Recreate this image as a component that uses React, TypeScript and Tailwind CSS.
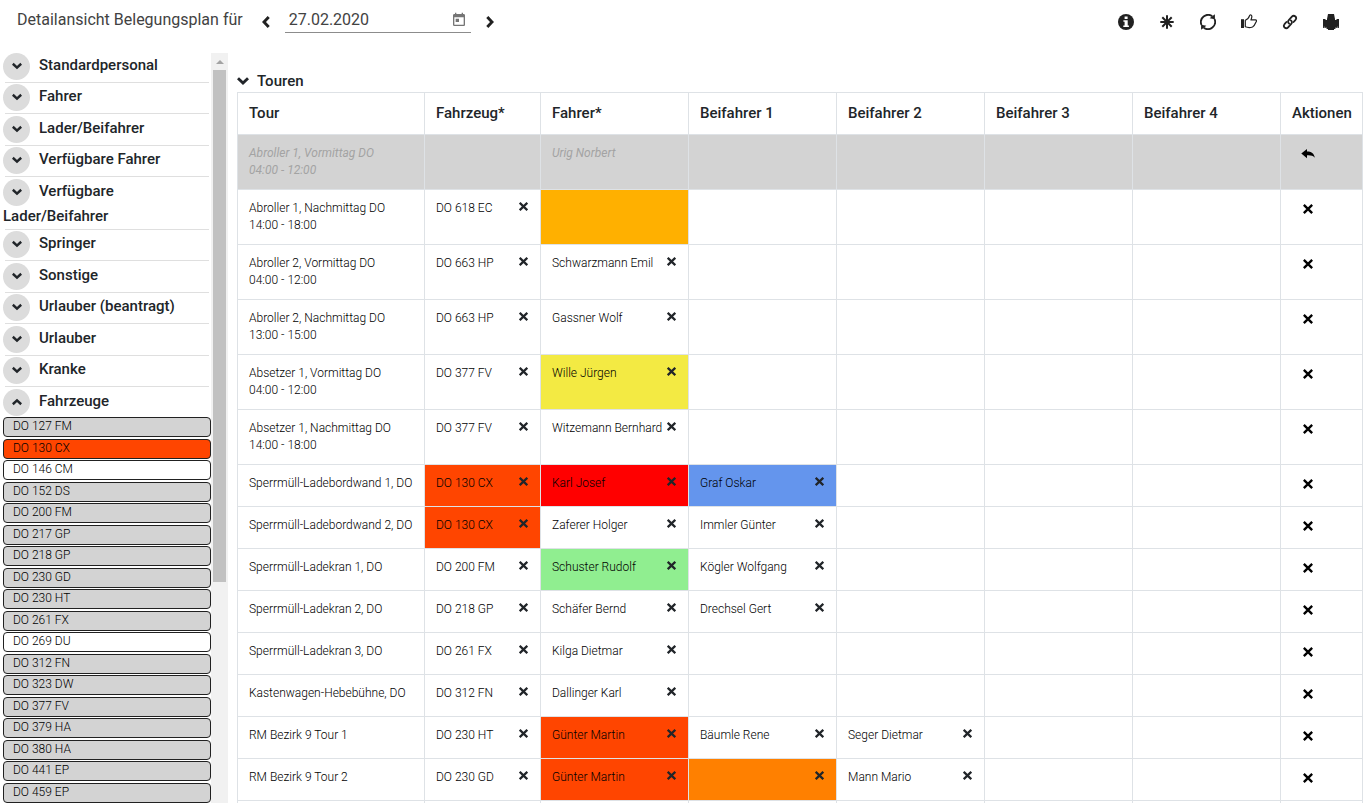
import { useState, type ReactNode } from "react";
import { MdToday } from "react-icons/md";

type Cell = { text?: string; color?: string; removable?: boolean };
type Tour = { name: string; time?: string; cancelled?: boolean; cells: Cell[] };

const p = (text: string, color = ""): Cell => ({ text, color, removable: true });

const ORANGE_RED = "bg-[#ff4500]";

const tours: Tour[] = [
  { name: "Abroller 1, Vormittag DO", time: "04:00 - 12:00", cancelled: true, cells: [{}, { text: "Urig Norbert" }] },
  { name: "Abroller 1, Nachmittag DO", time: "14:00 - 18:00", cells: [p("DO 618 EC"), { color: "bg-[#ffb000]" }] },
  { name: "Abroller 2, Vormittag DO", time: "04:00 - 12:00", cells: [p("DO 663 HP"), p("Schwarzmann Emil")] },
  { name: "Abroller 2, Nachmittag DO", time: "13:00 - 15:00", cells: [p("DO 663 HP"), p("Gassner Wolf")] },
  { name: "Absetzer 1, Vormittag DO", time: "04:00 - 12:00", cells: [p("DO 377 FV"), p("Wille Jürgen", "bg-[#f3ea43]")] },
  { name: "Absetzer 1, Nachmittag DO", time: "14:00 - 18:00", cells: [p("DO 377 FV"), p("Witzemann Bernhard")] },
  { name: "Sperrmüll-Ladebordwand 1, DO", cells: [p("DO 130 CX", ORANGE_RED), p("Karl Josef", "bg-[#ff0000]"), p("Graf Oskar", "bg-[#6495ed]")] },
  { name: "Sperrmüll-Ladebordwand 2, DO", cells: [p("DO 130 CX", ORANGE_RED), p("Zaferer Holger"), p("Immler Günter")] },
  { name: "Sperrmüll-Ladekran 1, DO", cells: [p("DO 200 FM"), p("Schuster Rudolf", "bg-[#90ee90]"), p("Kögler Wolfgang")] },
  { name: "Sperrmüll-Ladekran 2, DO", cells: [p("DO 218 GP"), p("Schäfer Bernd"), p("Drechsel Gert")] },
  { name: "Sperrmüll-Ladekran 3, DO", cells: [p("DO 261 FX"), p("Kilga Dietmar")] },
  { name: "Kastenwagen-Hebebühne, DO", cells: [p("DO 312 FN"), p("Dallinger Karl")] },
  { name: "RM Bezirk 9 Tour 1", cells: [p("DO 230 HT"), p("Günter Martin", ORANGE_RED), p("Bäumle Rene"), p("Seger Dietmar")] },
  { name: "RM Bezirk 9 Tour 2", cells: [p("DO 230 GD"), p("Günter Martin", ORANGE_RED), p("", "bg-[#ff8000]"), p("Mann Mario")] },
  { name: "", cells: [] },
];

const groups = [
  "Standardpersonal", "Fahrer", "Lader/Beifahrer", "Verfügbare Fahrer", "Verfügbare Lader/Beifahrer",
  "Springer", "Sonstige", "Urlauber (beantragt)", "Urlauber", "Kranke", "Fahrzeuge",
];

const vehicles: [string, string][] = [
  ["DO 127 FM", "bg-[#d3d3d3]"], ["DO 130 CX", ORANGE_RED], ["DO 146 CM", "bg-white"], ["DO 152 DS", "bg-[#d3d3d3]"],
  ["DO 200 FM", "bg-[#d3d3d3]"], ["DO 217 GP", "bg-[#d3d3d3]"], ["DO 218 GP", "bg-[#d3d3d3]"], ["DO 230 GD", "bg-[#d3d3d3]"],
  ["DO 230 HT", "bg-[#d3d3d3]"], ["DO 261 FX", "bg-[#d3d3d3]"], ["DO 269 DU", "bg-white"], ["DO 312 FN", "bg-[#d3d3d3]"],
  ["DO 323 DW", "bg-[#d3d3d3]"], ["DO 377 FV", "bg-[#d3d3d3]"], ["DO 379 HA", "bg-[#d3d3d3]"], ["DO 380 HA", "bg-[#d3d3d3]"],
  ["DO 441 EP", "bg-[#d3d3d3]"], ["DO 459 EP", "bg-[#d3d3d3]"],
];

const columns = ["Tour", "Fahrzeug*", "Fahrer*", "Beifahrer 1", "Beifahrer 2", "Beifahrer 3", "Beifahrer 4", "Aktionen"];

function Chevron({ className }: { className: string }) {
  return (
    <svg viewBox="0 0 12 12" className={className} fill="none" stroke="currentColor" strokeWidth="2.9">
      <path d="M1 3.300l5 4.700 5-4.700" />
    </svg>
  );
}

function CrossIcon({ className }: { className: string }) {
  return (
    <svg viewBox="0 0 10 10" className={className} fill="none" stroke="currentColor" strokeWidth="2.5">
      <path d="M.8.900l8.400 8.200M9.200.900L.8 9.100" />
    </svg>
  );
}

function ReplyIcon() {
  return (
    <svg viewBox="0 0 14 10" className="h-2.5 w-3.5" fill="currentColor">
      <path d="M.3 4.600L6 0v2.600c4.200 0 7.200 1.900 7.800 6.200-1.700-2.200-4.200-2.700-7.800-2.500v3z" />
    </svg>
  );
}

function InfoIcon() {
  return (
    <svg viewBox="0 0 16 16" className="size-4">
      <circle cx="8" cy="8" r="8" fill="currentColor" />
      <path d="M6.600 2.600h3v2.300h-3zM5.400 6.200h4.300v5.300h1.200V13H5.300v-1.500h1.300V7.700H5.400z" fill="#fff" />
    </svg>
  );
}

function AsteriskIcon() {
  return (
    <svg viewBox="0 0 16 16" className="size-4" fill="none" stroke="currentColor" strokeWidth="2">
      <path d="M8 1.300v13.400M1.300 8h13.400M3.300 3.300l9.400 9.400M12.700 3.300l-9.400 9.400" />
    </svg>
  );
}

function RefreshIcon() {
  return (
    <svg viewBox="0 0 16 16" className="size-4" fill="none" stroke="currentColor" strokeWidth="1.800">
      <path d="M1.500 11A7.200 7.200 0 0 1 12.300 2.300M14.500 5A7.200 7.200 0 0 1 3.700 13.700" />
      <path d="M14.900.3v5L9.600 4.200zM1.100 15.700v-5l5.300 1.100z" fill="currentColor" stroke="none" />
    </svg>
  );
}

function ThumbIcon() {
  return (
    <svg viewBox="0 0 16 16" className="size-4" fill="none" stroke="currentColor" strokeWidth="1.200" strokeLinejoin="round">
      <path d="M0 5.200h3v8.800H0z" fill="currentColor" stroke="none" />
      <path d="M4.300 6.300C6.600 5.600 8 3.400 8.700 1.400c.3-.9 2.400-.5 2.100 1.600-.1 1-.5 2-.9 2.900h4.600c1.300 0 1.200 1.600.4 2.300-.8 1.900-1.900 4-3.400 4.800-2 .7-4.700.8-7.200-.2z" />
    </svg>
  );
}

function LinkIcon() {
  return (
    <svg viewBox="0 0 16 16" className="size-4" fill="none" stroke="currentColor" strokeWidth="1.800" strokeLinecap="round">
      <path d="M7.100 9.600c-1.300-1-1.300-2.400-.3-3.500l3.100-3.400c1.100-1.200 2.600-1 3.500-.2.900.9 1 2.200.1 3.300L11.600 8" />
      <path d="M8.900 6.400c1.300 1 1.300 2.400.3 3.500l-3.100 3.400c-1.100 1.200-2.600 1-3.500.2-.9-.9-1-2.200-.1-3.300L4.400 8" />
    </svg>
  );
}

function PrintIcon() {
  return (
    <svg viewBox="0 0 16 16" className="size-4" fill="currentColor">
      <path d="M5 0h6l1 5v1h1.500V5H16v9h-2.500l-.6-1-.6 2H11v1H5v-1H3.700l-.6-2-.6 1H0V5h2.500v1H4V5z" />
      <path d="M.8 13.200h1M14.200 13.200h1" stroke="#fff" strokeWidth=".8" />
    </svg>
  );
}

function ToolButton({ label, children }: { label: string; children: ReactNode }) {
  return (
    <button type="button" aria-label={label} className="flex size-4 items-center justify-center">
      {children}
    </button>
  );
}

function Header() {
  const [date, setDate] = useState("27.02.2020");
  return (
    <header className="flex h-11 shrink-0 items-center justify-between pl-[17px] pr-[31px] text-[#212121]">
      <div className="flex items-center">
        <label htmlFor="date" className="pb-1 text-base font-normal text-[#424242]">Detailansicht Belegungsplan für</label>
        <button type="button" aria-label="Vorheriger Tag" className="ml-[17px] flex w-3 justify-center">
          <Chevron className="size-3 rotate-90" />
        </button>
        <div className="mb-[3px] ml-[13px] flex w-[186px] items-center justify-between border-b border-[#8c8c8c] pl-1 pr-1">
          <input id="date" type="text" value={date} onChange={(e) => setDate(e.target.value)} className="w-36 text-base leading-6 text-[#424242] outline-none" />
          <button type="button" aria-label="Kalender öffnen"><MdToday className="size-4 text-[#757575]" /></button>
        </div>
        <button type="button" aria-label="Nächster Tag" className="ml-[13px] flex w-3 justify-center">
          <Chevron className="size-3 -rotate-90" />
        </button>
      </div>
      <div className="flex gap-[25px]">
        <ToolButton label="Information"><InfoIcon /></ToolButton>
        <ToolButton label="Neu"><AsteriskIcon /></ToolButton>
        <ToolButton label="Aktualisieren"><RefreshIcon /></ToolButton>
        <ToolButton label="Freigeben"><ThumbIcon /></ToolButton>
        <ToolButton label="Verknüpfen"><LinkIcon /></ToolButton>
        <ToolButton label="Drucken"><PrintIcon /></ToolButton>
      </div>
    </header>
  );
}

function Sidebar() {
  return (
    <aside className="flex w-[225px] shrink-0 overflow-hidden">
      <div className="min-w-0 flex-1">
        <ul>
          {groups.map((g) => {
            const open = g === "Fahrzeuge";
            return (
              <li key={g} className="odd:pt-0.5 even:pt-px">
                <button type="button" aria-expanded={open} className="block w-full text-left text-[15px] font-medium leading-[21px] text-[#212529]">
                  <span className="mr-[9px] inline-flex size-[27px] items-center justify-center rounded-full bg-[#dcdcdc] pb-0.5 align-middle">
                    <Chevron className={open ? "size-2.5 rotate-180" : "size-2.5"} />
                  </span>
                  {g}
                </button>
                {!open && <hr className="mx-0.5 mt-0.5 border-[#dfdfdf]" />}
              </li>
            );
          })}
        </ul>
        <ul className="pt-px">
          {vehicles.map(([name, color]) => (
            <li key={name} className={`h-5 rounded border border-[#212121] pl-[9px] text-xs font-light leading-4 text-black odd:mb-0.5 even:mb-px ${color}`}>
              {name}
            </li>
          ))}
        </ul>
      </div>
      <div className="mt-0.5 w-[17px] shrink-0 bg-[#f1f1f1] px-0.5">
        <div className="flex h-[17px] items-center justify-center">
          <svg viewBox="0 0 8 4" className="h-1 w-2" fill="#a3a3a3"><path d="M4 0l4 4H0z" /></svg>
        </div>
        <div className="h-[512px] bg-[#c1c1c1]" />
      </div>
    </aside>
  );
}

function TourRow({ tour }: { tour: Tour }) {
  const td = "h-[42px] whitespace-nowrap border border-[#dee2e6] px-[11px] pb-2.5 pt-2.5 align-top";
  return (
    <tr className={tour.cancelled ? "bg-[#d3d3d3] font-normal italic text-[#a3a3a3]" : "font-light text-black"}>
      <td className={td}>
        <div>{tour.name}</div>
        {tour.time && <div>{tour.time}</div>}
      </td>
      {[0, 1, 2, 3, 4, 5].map((i) => {
        const c = tour.cells[i] ?? {};
        return (
          <td key={i} className={`${td} ${c.color ?? ""}`}>
            <div className="flex items-start justify-between">
              <span>{c.text}</span>
              {c.removable && (
                <button type="button" aria-label={`${c.text || "Eintrag"} entfernen`} className="flex h-3 w-[11px] shrink-0 items-center justify-center text-[#212529]">
                  <CrossIcon className="size-[9px]" />
                </button>
              )}
            </div>
          </td>
        );
      })}
      <td className={td}>
        <button type="button" aria-label={tour.cancelled ? "Wiederherstellen" : "Tour entfernen"} className="ml-2 flex h-[17px] w-4 items-center justify-center text-black">
          {tour.cancelled ? <ReplyIcon /> : <CrossIcon className="size-2.5" />}
        </button>
      </td>
    </tr>
  );
}

export default function App() {
  return (
    <div className="flex h-screen flex-col overflow-hidden bg-white font-['Roboto',sans-serif] text-[#212529]">
      <Header />
      <div className="flex min-h-0 flex-1 pl-[3px] pr-[7px] pt-[7px]">
        <Sidebar />
        <main className="ml-[9px] min-w-0 flex-1 overflow-hidden pt-[19px]">
          <button type="button" aria-expanded="true" className="flex h-[22px] items-center gap-2 text-[15px] font-medium">
            <Chevron className="size-3" />
            Touren
          </button>
          <table className="w-full table-fixed border-collapse text-xs leading-[17px]">
            <colgroup>
              <col className="w-[187px]" />
              <col className="w-[116px]" />
              <col className="w-[148px]" />
              <col className="w-[148px]" />
              <col className="w-[148px]" />
              <col className="w-[148px]" />
              <col className="w-[148px]" />
              <col className="w-[82px]" />
            </colgroup>
            <thead>
              <tr>
                {columns.map((c) => (
                  <th key={c} scope="col" className="h-[42px] whitespace-nowrap border border-[#dee2e6] px-[11px] text-left text-[15px] font-medium">{c}</th>
                ))}
              </tr>
            </thead>
            <tbody>
              {tours.map((t) => <TourRow key={t.name} tour={t} />)}
            </tbody>
          </table>
        </main>
      </div>
    </div>
  );
}
